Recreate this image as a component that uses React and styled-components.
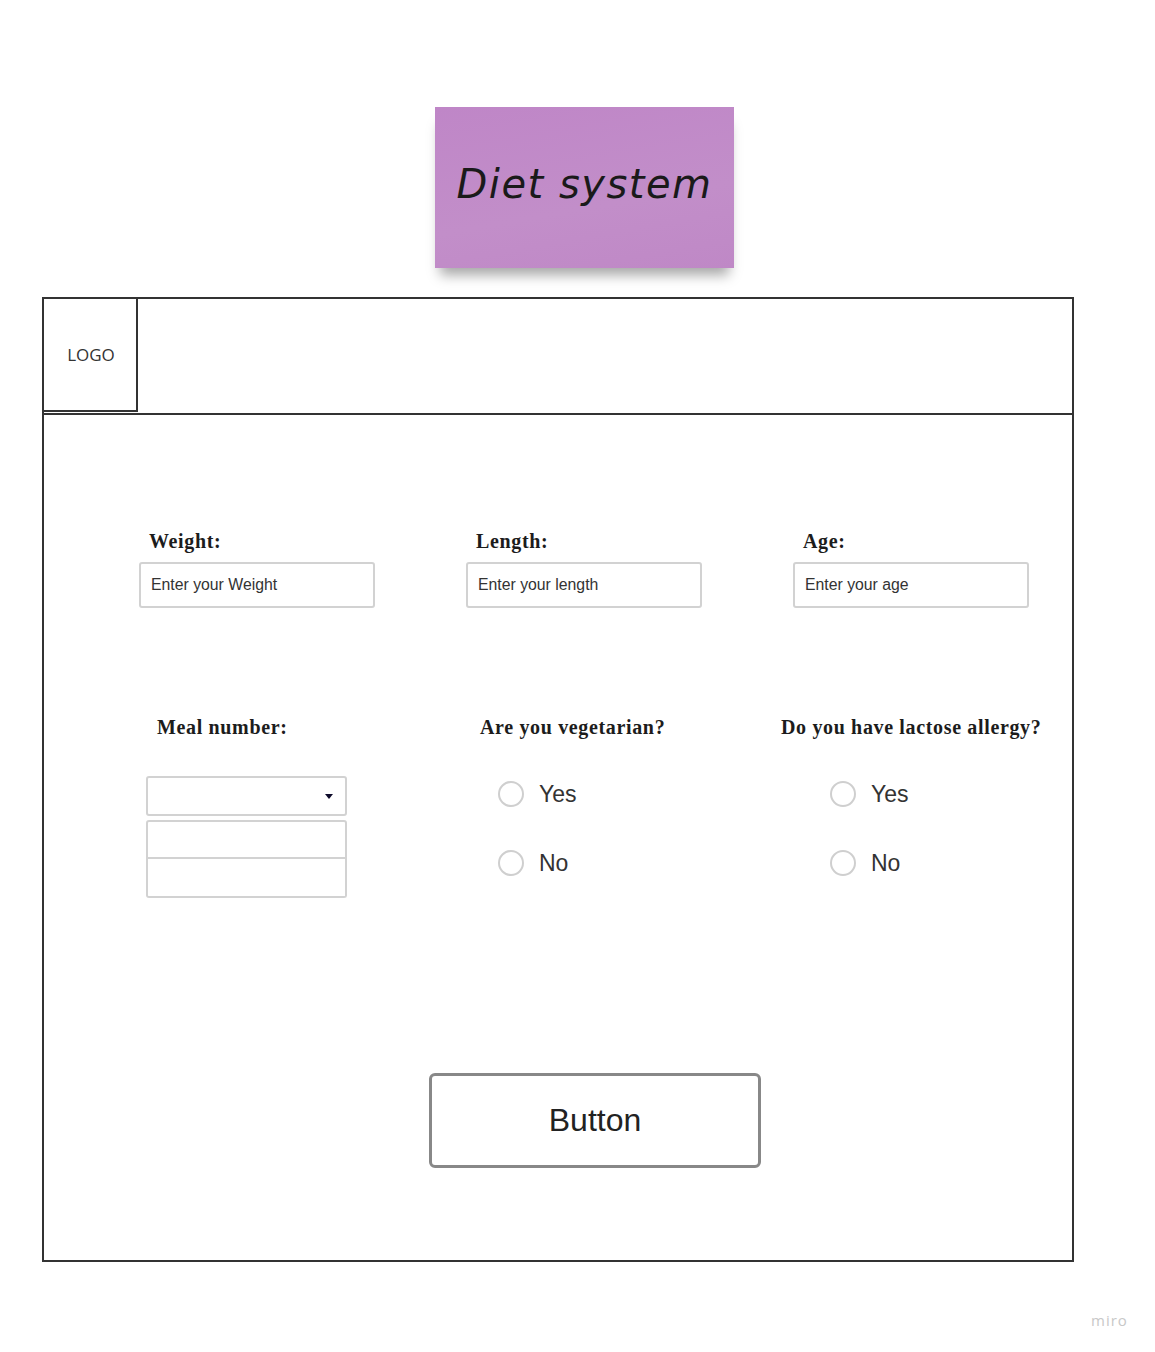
import React from "react";
import styled, { createGlobalStyle } from "styled-components";

const GlobalStyle = createGlobalStyle`
  body {
    margin: 0;
    background: #fff;
    font-family: "Liberation Sans", Arial, sans-serif;
  }
`;

const Page = styled.div`
  position: relative;
  width: 1155px;
  min-height: 1352px;
  padding-top: 107px;
  box-sizing: border-box;
`;

const StickyNote = styled.div`
  margin-left: 435px;
  width: 299px;
  height: 161px;
  background: linear-gradient(170deg, #bf86c7 0%, #c28ec9 60%, #bf88c6 100%);
  box-shadow: 0 12px 12px -5px rgba(0, 0, 0, 0.35);
  display: flex;
  align-items: center;
  justify-content: center;
  font-family: "DejaVu Sans", sans-serif;
  font-style: oblique;
  font-weight: 300;
  font-size: 40px;
  letter-spacing: 1.5px;
  color: #1a1a1a;
  padding-bottom: 8px;
  box-sizing: border-box;
`;

const Frame = styled.div`
  margin-top: 29px;
  margin-left: 42px;
  width: 1032px;
  height: 965px;
  border: 2px solid #333;
  box-sizing: border-box;
  display: flex;
  flex-direction: column;
`;

const Header = styled.div`
  height: 116px;
  border-bottom: 2px solid #333;
  box-sizing: border-box;
  display: flex;
`;

const LogoBox = styled.div`
  width: 94px;
  height: 113px;
  border-right: 2px solid #333;
  border-bottom: 2px solid #333;
  box-sizing: border-box;
  display: flex;
  align-items: center;
  justify-content: center;
  font-family: "Open Sans", sans-serif;
  font-size: 17px;
  color: #333;
  padding-left: 2px;
`;

const Body = styled.div`
  flex: 1;
  display: flex;
  flex-direction: column;
  padding-top: 114px;
`;

const Row = styled.div`
  display: grid;
  grid-template-columns: ${(p) => p.$cols};
  padding-left: ${(p) => p.$left}px;
`;

const Field = styled.div`
  display: flex;
  flex-direction: column;
`;

const Label = styled.div`
  font-family: "Liberation Serif", "Times New Roman", serif;
  font-weight: bold;
  font-size: 20px;
  letter-spacing: 0.65px;
  color: #1c1c1c;
  line-height: 24px;
  padding-left: ${(p) => p.$indent || 0}px;
`;

const TextInput = styled.div`
  margin-top: 9px;
  width: 236px;
  height: 46px;
  border: 2px solid #d2d2d2;
  border-radius: 3px;
  box-sizing: border-box;
  display: flex;
  align-items: center;
  padding-left: 10px;
  font-size: 15.8px;
  color: #333;
`;

const SecondRow = styled(Row)`
  margin-top: 107px;
`;

const SelectStack = styled.div`
  margin-top: 37px;
  width: 201px;
  display: flex;
  flex-direction: column;
`;

const SelectBox = styled.div`
  height: 40px;
  border: 2px solid #d2d2d2;
  border-radius: 3px;
  box-sizing: border-box;
  display: flex;
  align-items: center;
  justify-content: flex-end;
  padding-right: 12px;
  margin-bottom: 4px;
`;

const Caret = styled.span`
  width: 0;
  height: 0;
  border-left: 4px solid transparent;
  border-right: 4px solid transparent;
  border-top: 5px solid #0d0a2a;
`;

const OptionBox = styled.div`
  height: 39px;
  border: 2px solid #d2d2d2;
  border-top-width: ${(p) => (p.$first ? 2 : 0)}px;
  border-radius: ${(p) => (p.$first ? "3px 3px 0 0" : "0 0 3px 3px")};
  box-sizing: border-box;
`;

const RadioList = styled.div`
  margin-top: 42px;
  padding-left: ${(p) => p.$indent}px;
  display: flex;
  flex-direction: column;
  gap: 43px;
`;

const RadioRow = styled.div`
  display: flex;
  align-items: center;
  gap: 15px;
  height: 26px;
  font-size: 23px;
  color: #333;
`;

const Circle = styled.span`
  width: 26px;
  height: 26px;
  border: 2px solid #cfcfcf;
  border-radius: 50%;
  box-sizing: border-box;
`;

const ButtonRow = styled.div`
  margin-top: 175px;
  padding-left: 385px;
`;

const Button = styled.div`
  width: 332px;
  height: 95px;
  border: 3px solid #888;
  border-radius: 6px;
  box-sizing: border-box;
  display: flex;
  align-items: center;
  justify-content: center;
  font-size: 32px;
  color: #222;
`;

const Watermark = styled.div`
  position: absolute;
  left: 1091px;
  top: 1310px;
  font-family: "Open Sans", sans-serif;
  font-size: 15px;
  letter-spacing: 1px;
  color: #c8c8c8;
`;

const Radio = ({ label }) => (
  <RadioRow>
    <Circle />
    {label}
  </RadioRow>
);

export default function App() {
  return (
    <>
      <GlobalStyle />
      <Page>
        <StickyNote>Diet system</StickyNote>
        <Frame>
          <Header>
            <LogoBox>LOGO</LogoBox>
          </Header>
          <Body>
            <Row $cols="327px 327px 327px" $left={95}>
              <Field>
                <Label $indent={10}>Weight:</Label>
                <TextInput>Enter your Weight</TextInput>
              </Field>
              <Field>
                <Label $indent={10}>Length:</Label>
                <TextInput>Enter your length</TextInput>
              </Field>
              <Field>
                <Label $indent={10}>Age:</Label>
                <TextInput>Enter your age</TextInput>
              </Field>
            </Row>
            <SecondRow $cols="334px 301px 280px" $left={102}>
              <Field>
                <Label $indent={11}>Meal number:</Label>
                <SelectStack>
                  <SelectBox>
                    <Caret />
                  </SelectBox>
                  <OptionBox $first />
                  <OptionBox />
                </SelectStack>
              </Field>
              <Field>
                <Label>Are you vegetarian?</Label>
                <RadioList $indent={18}>
                  <Radio label="Yes" />
                  <Radio label="No" />
                </RadioList>
              </Field>
              <Field>
                <Label>Do you have lactose allergy?</Label>
                <RadioList $indent={49}>
                  <Radio label="Yes" />
                  <Radio label="No" />
                </RadioList>
              </Field>
            </SecondRow>
            <ButtonRow>
              <Button>Button</Button>
            </ButtonRow>
          </Body>
        </Frame>
        <Watermark>miro</Watermark>
      </Page>
    </>
  );
}
